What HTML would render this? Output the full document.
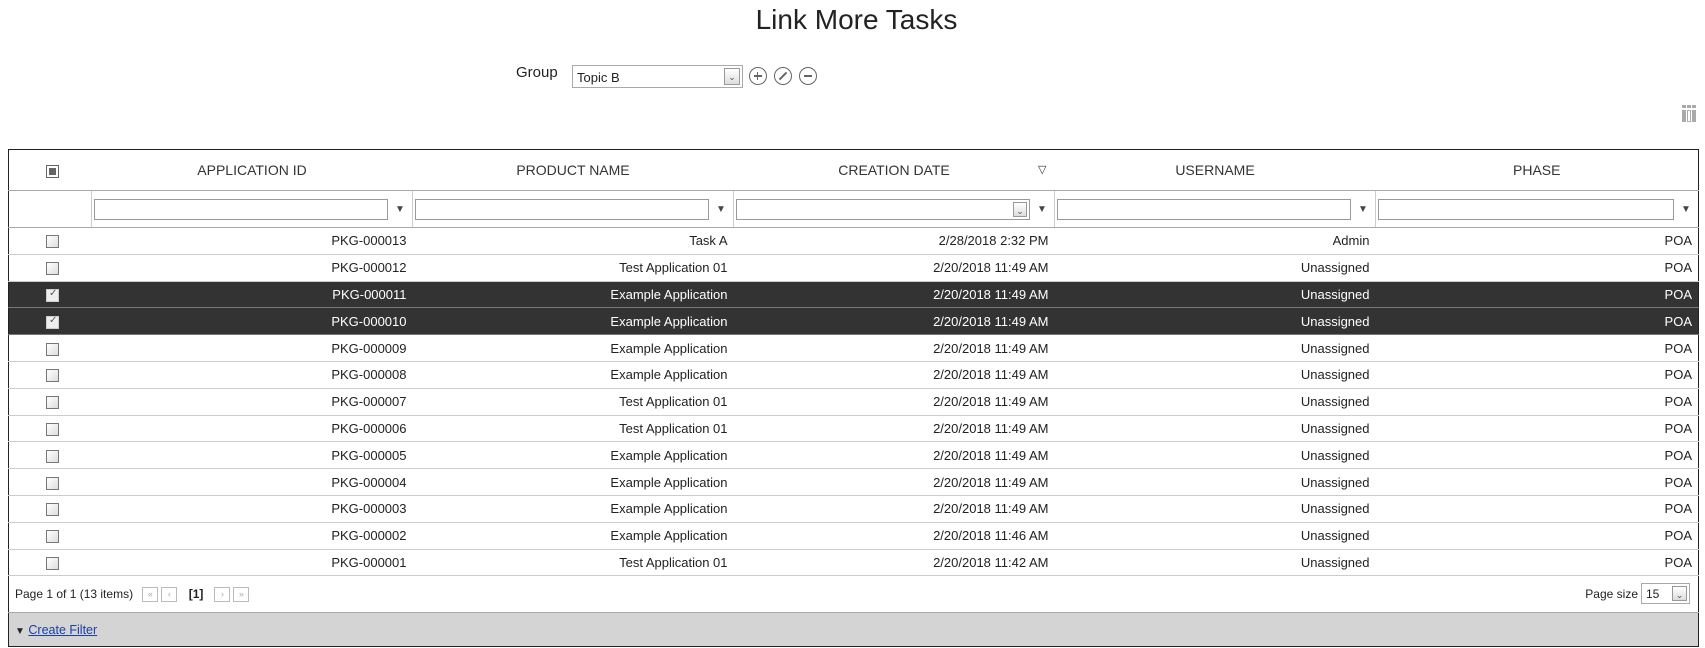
<!DOCTYPE html>
<html><head><meta charset="utf-8"><style>
body{margin:0;width:1705px;height:648px;background:#fff;font-family:"Liberation Sans",sans-serif;color:#222;position:relative;overflow:hidden}
.abs{position:absolute}
h1{position:absolute;left:0;width:1713px;top:1px;margin:0;text-align:center;font-weight:normal;font-size:28px;line-height:38px;color:#222}
.sel{border:1px solid #aaa;background:#fff;box-sizing:border-box}
.dd{position:absolute;right:2px;top:2px;bottom:2px;width:16px;border:1px solid #999;background:linear-gradient(#fff,#ddd);box-sizing:border-box;font-size:9px;text-align:center;line-height:16px;color:#555}
.ci{position:absolute;width:18px;height:18px;border:1.5px solid #666;border-radius:50%;box-sizing:border-box;top:67px}
table{position:absolute;left:8px;top:149px;width:1691px;border-collapse:collapse;table-layout:fixed;border:1px solid #222;font-size:13px}
td,th{padding:0 6px;white-space:nowrap;overflow:hidden}
th{height:40px;font-weight:normal;font-size:14px;color:#333;border-bottom:1px solid #aaa}
tr.f td{height:36px;border-bottom:1px solid #aaa;border-left:1px solid #ccc;padding:0 2px;position:relative}
tr.f td:first-child{border-left:none}
tr.d td{height:25.8px;border-bottom:1px solid #ccc;text-align:right}
tr.d td:first-child{text-align:left;padding-left:37px}
tr.s td{background:#333;color:#fff;border-bottom:1px solid #777}
.cb{display:inline-block;width:13px;height:13px;border:1px solid #777;background:linear-gradient(135deg,#fff,#ddd);vertical-align:middle;box-sizing:border-box;position:relative}
.cbk{background:#eee;border-color:#ccc}
.cbk:after{content:"✓";position:absolute;left:2px;top:-2px;font-size:10px;color:#555}
.fi{width:calc(100% - 22px);height:21px;border:1px solid #999;box-sizing:border-box;display:inline-block;vertical-align:middle;background:#fff;position:relative}
.fn{display:inline-block;width:12px;text-align:center;font-size:10px;vertical-align:middle;margin-left:6px;color:#444}
tr.p td{height:36px;border-top:1px solid #222;font-size:12px;text-align:left}
tr.ft td{height:33px;background:#d4d4d4;border-top:1px solid #aaa;font-size:12.5px}
.pb{display:inline-block;width:14px;height:13px;border:1px solid #bbb;font-size:9px;color:#aaa;text-align:center;line-height:12px;vertical-align:middle;margin-left:3px}
a{color:#1a3fa8}
</style></head><body>
<h1>Link More Tasks</h1>
<div class="abs" style="left:516px;top:64px;font-size:15px">Group</div>
<div class="abs sel" style="left:572px;top:65px;width:171px;height:23px;font-size:13px;padding:4px 0 0 4px">Topic B<div class="dd">&#8964;</div></div>
<div class="ci" style="left:749px"><div class="abs" style="left:3.5px;top:7px;width:8px;height:1.5px;background:#666"></div><div class="abs" style="left:6.8px;top:3.5px;width:1.5px;height:8px;background:#666"></div></div>
<div class="ci" style="left:774px"><div class="abs" style="left:6.5px;top:2.5px;width:2px;height:10px;background:#666;transform:rotate(45deg)"></div></div>
<div class="ci" style="left:799px"><div class="abs" style="left:3.5px;top:7px;width:8px;height:1.5px;background:#666"></div></div>
<div class="abs" style="left:1682px;top:105px;width:15px;height:17px">
<div class="abs" style="left:0;top:0;width:4px;height:3px;background:#aaa"></div><div class="abs" style="left:5px;top:0;width:4px;height:3px;background:#aaa"></div><div class="abs" style="left:10px;top:0;width:4px;height:3px;background:#aaa"></div>
<div class="abs" style="left:0;top:5px;width:4px;height:12px;background:#aaa"></div><div class="abs" style="left:5px;top:5px;width:4px;height:12px;border:1px solid #aaa;box-sizing:border-box"></div><div class="abs" style="left:10px;top:5px;width:4px;height:12px;background:#aaa"></div></div>
<table>
<colgroup><col style="width:83px"><col style="width:321px"><col style="width:321px"><col style="width:321px"><col style="width:321px"><col></colgroup>
<tr><th style="text-align:left;padding-left:37px"><span class="cb" style="background:#fff;border-color:#666"><span class="abs" style="left:2px;top:2px;width:7px;height:7px;background:#666"></span></span></th><th>APPLICATION ID</th><th>PRODUCT NAME</th><th style="position:relative">CREATION DATE<span class="abs" style="right:8px;top:13px;font-size:11px">&#9661;</span></th><th>USERNAME</th><th>PHASE</th></tr>
<tr class="f"><td></td><td><span class="fi"></span><span class="fn">&#9660;</span></td><td><span class="fi"></span><span class="fn">&#9660;</span></td><td><span class="fi"><span class="dd" style="width:14px">&#8964;</span></span><span class="fn">&#9660;</span></td><td><span class="fi"></span><span class="fn">&#9660;</span></td><td><span class="fi"></span><span class="fn">&#9660;</span></td></tr>
<tr class="d"><td><span class="cb"></span></td><td>PKG-000013</td><td>Task A</td><td>2/28/2018 2:32 PM</td><td>Admin</td><td>POA</td></tr>
<tr class="d"><td><span class="cb"></span></td><td>PKG-000012</td><td>Test Application 01</td><td>2/20/2018 11:49 AM</td><td>Unassigned</td><td>POA</td></tr>
<tr class="d s"><td><span class="cb cbk"></span></td><td>PKG-000011</td><td>Example Application</td><td>2/20/2018 11:49 AM</td><td>Unassigned</td><td>POA</td></tr>
<tr class="d s"><td><span class="cb cbk"></span></td><td>PKG-000010</td><td>Example Application</td><td>2/20/2018 11:49 AM</td><td>Unassigned</td><td>POA</td></tr>
<tr class="d"><td><span class="cb"></span></td><td>PKG-000009</td><td>Example Application</td><td>2/20/2018 11:49 AM</td><td>Unassigned</td><td>POA</td></tr>
<tr class="d"><td><span class="cb"></span></td><td>PKG-000008</td><td>Example Application</td><td>2/20/2018 11:49 AM</td><td>Unassigned</td><td>POA</td></tr>
<tr class="d"><td><span class="cb"></span></td><td>PKG-000007</td><td>Test Application 01</td><td>2/20/2018 11:49 AM</td><td>Unassigned</td><td>POA</td></tr>
<tr class="d"><td><span class="cb"></span></td><td>PKG-000006</td><td>Test Application 01</td><td>2/20/2018 11:49 AM</td><td>Unassigned</td><td>POA</td></tr>
<tr class="d"><td><span class="cb"></span></td><td>PKG-000005</td><td>Example Application</td><td>2/20/2018 11:49 AM</td><td>Unassigned</td><td>POA</td></tr>
<tr class="d"><td><span class="cb"></span></td><td>PKG-000004</td><td>Example Application</td><td>2/20/2018 11:49 AM</td><td>Unassigned</td><td>POA</td></tr>
<tr class="d"><td><span class="cb"></span></td><td>PKG-000003</td><td>Example Application</td><td>2/20/2018 11:49 AM</td><td>Unassigned</td><td>POA</td></tr>
<tr class="d"><td><span class="cb"></span></td><td>PKG-000002</td><td>Example Application</td><td>2/20/2018 11:46 AM</td><td>Unassigned</td><td>POA</td></tr>
<tr class="d"><td><span class="cb"></span></td><td>PKG-000001</td><td>Test Application 01</td><td>2/20/2018 11:42 AM</td><td>Unassigned</td><td>POA</td></tr>
<tr class="p"><td colspan="6" style="position:relative">Page 1 of 1 (13 items) <span class="pb" style="margin-left:6px">&laquo;</span><span class="pb">&lsaquo;</span> <b style="margin:0 8px 0 8px">[1]</b><span class="pb">&rsaquo;</span><span class="pb">&raquo;</span>
<span class="abs" style="right:60px;top:11px">Page size</span><span class="abs sel" style="right:8px;top:7px;width:49px;height:21px;padding:3px 0 0 4px">15<span class="dd" style="width:15px">&#8964;</span></span></td></tr>
<tr class="ft"><td colspan="6" style="text-align:left;padding-left:6px"><span style="font-size:10px">&#9660;</span> <a href="#">Create Filter</a></td></tr>
</table>
</body></html>
